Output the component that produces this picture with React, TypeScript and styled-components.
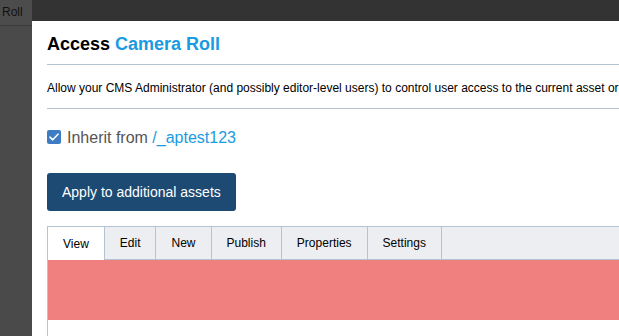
import React from "react";
import styled, { createGlobalStyle } from "styled-components";

const Global = createGlobalStyle`
  html, body { margin: 0; padding: 0; }
  body {
    background: #4a4a4a;
    overflow: hidden;
    font-family: "Liberation Sans", Arial, sans-serif;
    width: 619px;
    height: 336px;
  }
`;

const Backdrop = styled.div`
  position: relative;
  width: 619px;
  height: 336px;
  background: #4a4a4a;
  overflow: hidden;
`;

const TopBar = styled.div`
  display: flex;
  align-items: flex-start;
  height: 21px;
  background: #333333;
`;

const NavTab = styled.div`
  width: 32px;
  height: 26px;
  box-sizing: border-box;
  background: #4c4c4c;
  border-bottom: 1px solid #3b3b3b;
  color: #111;
  font-size: 12px;
  padding-left: 2px;
  padding-bottom: 1px;
  line-height: 24px;
  overflow: hidden;
  white-space: nowrap;
`;

const Modal = styled.div`
  position: absolute;
  left: 32px;
  top: 21px;
  width: 800px;
  height: 400px;
  background: #fff;
  padding-left: 15px;
  box-sizing: border-box;
`;

const Title = styled.h2`
  margin: 0;
  padding: 13px 0 9px;
  font-size: 18px;
  line-height: 21px;
  font-weight: bold;
  color: #000;
  border-bottom: 1px solid #b3c5d3;
`;

const Accent = styled.span`
  color: #1a9ae0;
`;

const Description = styled.p`
  margin: 0;
  padding: 16px 0 13px;
  font-size: 12px;
  line-height: 14px;
  color: #000;
  white-space: nowrap;
  border-bottom: 1px solid #b3c5d3;
`;

const InheritRow = styled.label`
  display: flex;
  align-items: center;
  gap: 6px;
  margin-top: 20px;
  height: 18px;
  font-size: 16px;
  color: #555;
`;

const Check = styled.span`
  display: inline-flex;
  align-items: center;
  justify-content: center;
  width: 14px;
  height: 14px;
  border-radius: 2px;
  background: #3d7cc3;
  margin-top: -3px;
`;

const Link = styled.a`
  color: #1a9ae0;
  text-decoration: none;
`;

const ApplyButton = styled.button`
  display: block;
  margin-top: 26px;
  height: 38px;
  padding: 0 15px;
  border: none;
  border-radius: 3px;
  background: #1d4a72;
  color: #fff;
  font-family: "Liberation Sans", Arial, sans-serif;
  font-size: 14px;
`;

const TabsBox = styled.div`
  margin-top: 15px;
  border-top: 1px solid #b6c4d1;
  border-left: 1px solid #b6c4d1;
`;

const TabStrip = styled.div`
  display: flex;
  height: 32px;
  background: #eceef1;
  border-bottom: 1px solid #b6c4d1;
`;

const Tab = styled.div<{ $active?: boolean }>`
  height: ${(p) => (p.$active ? "33px" : "32px")};
  box-sizing: border-box;
  padding: 0 15px;
  display: flex;
  align-items: center;
  font-size: 12px;
  color: #000;
  background: ${(p) => (p.$active ? "#fff" : "transparent")};
  border-right: 1px solid #b6c4d1;
  position: relative;
  z-index: 1;
`;

const Alert = styled.div`
  height: 60px;
  background: #f08080;
`;

const PanelBody = styled.div`
  height: 60px;
  background: #fff;
`;

const tabs = ["View", "Edit", "New", "Publish", "Properties", "Settings"];

export default function App() {
  return (
    <>
      <Global />
      <Backdrop>
        <TopBar>
          <NavTab>Roll</NavTab>
        </TopBar>
        <Modal>
          <Title>
            Access <Accent>Camera Roll</Accent>
          </Title>
          <Description>
            Allow your CMS Administrator (and possibly editor-level users) to control user access to the current asset or
          </Description>
          <InheritRow>
            <Check>
              <svg width="10" height="8" viewBox="0 0 10 8">
                <path d="M1 4.2 L3.7 6.8 L9 1.2" stroke="#fff" strokeWidth="1.6" fill="none" strokeLinecap="round" strokeLinejoin="round" />
              </svg>
            </Check>
            <span>
              Inherit from <Link href="#">/_aptest123</Link>
            </span>
          </InheritRow>
          <ApplyButton>Apply to additional assets</ApplyButton>
          <TabsBox>
            <TabStrip>
              {tabs.map((t, i) => (
                <Tab key={t} $active={i === 0}>
                  {t}
                </Tab>
              ))}
            </TabStrip>
            <Alert />
            <PanelBody />
          </TabsBox>
        </Modal>
      </Backdrop>
    </>
  );
}
